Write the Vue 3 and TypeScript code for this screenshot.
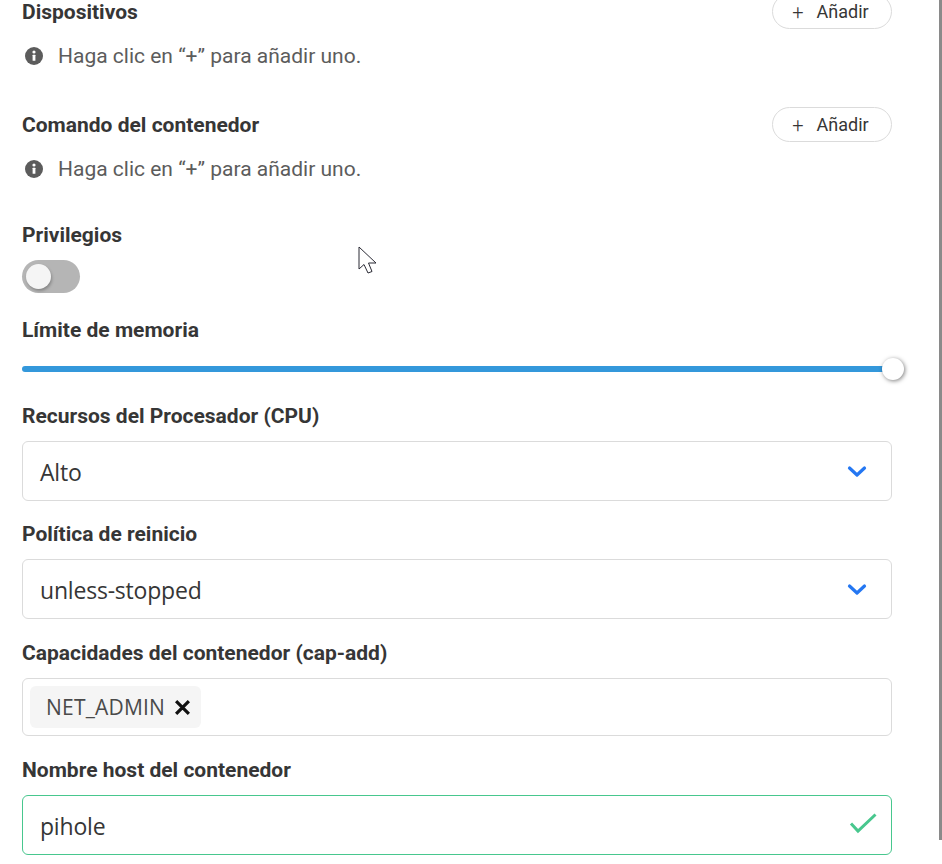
<script setup lang="ts">
const addSections = ['Dispositivos', 'Comando del contenedor']
const selects = [
  { label: 'Recursos del Procesador (CPU)', value: 'Alto' },
  { label: 'Política de reinicio', value: 'unless-stopped' },
]
</script>

<template>
  <div class="viewport">
    <form class="form" @submit.prevent>
      <section v-for="name in addSections" :key="name" class="add-section">
        <div class="add-head">
          <label class="label">{{ name }}</label>
          <button type="button" class="add-btn"><span class="plus">+</span>Añadir</button>
        </div>
        <div class="hint">
          <svg class="hint-icon" viewBox="0 0 18 18" width="18" height="18">
            <circle cx="9" cy="9" r="9" fill="#5c5c5c" />
            <circle cx="9" cy="5" r="1.6" fill="#fff" />
            <rect x="7.6" y="7.8" width="2.8" height="6" rx=".4" fill="#fff" />
          </svg>
          <span>Haga clic en “+” para añadir uno.</span>
        </div>
      </section>

      <div class="field privileged">
        <label class="label">Privilegios</label>
        <div class="switch"><span class="knob"></span></div>
      </div>

      <div class="field memory">
        <label class="label">Límite de memoria</label>
        <div class="slider">
          <div class="track"></div>
          <span class="thumb"></span>
        </div>
      </div>

      <div v-for="s in selects" :key="s.label" class="field select-field">
        <label class="label">{{ s.label }}</label>
        <div class="control">
          <span>{{ s.value }}</span>
          <svg class="chevron" viewBox="0 0 20 14" width="20" height="14">
            <path d="M2.5 3 L10 10 L17.5 3" fill="none" stroke="#2477f2" stroke-width="3.2" stroke-linecap="round" stroke-linejoin="round" />
          </svg>
        </div>
      </div>

      <div class="field caps">
        <label class="label">Capacidades del contenedor (cap-add)</label>
        <div class="tags">
          <span class="tag"><span class="tag-text">NET_ADMIN</span>
            <svg viewBox="0 0 16 16" width="17" height="17">
              <path d="M2 2 L14 14 M14 2 L2 14" stroke="#111" stroke-width="3" fill="none" />
            </svg>
          </span>
        </div>
      </div>

      <div class="field hostname">
        <label class="label">Nombre host del contenedor</label>
        <div class="control valid">
          <span>pihole</span>
          <svg class="check" viewBox="0 0 28 22" width="28" height="22">
            <path d="M2 9.5 L9 17 L26.5 0.5" fill="none" stroke="#48c78e" stroke-width="3" />
          </svg>
        </div>
      </div>
    </form>

    <!-- mouse pointer caught in the screenshot -->
    <svg class="pointer" viewBox="0 0 20 30" width="20" height="30">
      <path d="M1 1 V23 L6 18.5 L10 27 L14 25.5 L10.5 17 H18 Z" fill="#fff" stroke="#2b2b35" stroke-width="1" />
    </svg>
    <div class="scrollbar"></div>
  </div>
</template>

<style scoped>
.viewport {
  position: relative;
  height: 864px;
  overflow: hidden;
  background: #fff;
  font-family: Roboto, "Liberation Sans", sans-serif;
  color: #363636;
}
.form {
  width: 870px;
  margin: -6px 0 0 22px;
}
.label {
  display: block;
  font-size: 21px;
  font-weight: 700;
  line-height: 24px;
  color: #363636;
}
.add-section {
  height: 113px;
}
.add-head {
  display: flex;
  align-items: center;
  justify-content: space-between;
  height: 35px;
}
.add-btn {
  display: flex;
  align-items: center;
  justify-content: center;
  width: 120px;
  height: 35px;
  padding: 0 3px 0 0;
  background: #fff;
  border: 1px solid #dbdbdb;
  border-radius: 18px;
  font-family: inherit;
  font-size: 18px;
  color: #363636;
}
.plus {
  margin-right: 13px;
  font-size: 20px;
  font-weight: 300;
}
.hint {
  display: flex;
  align-items: center;
  margin-top: 15px;
  padding-left: 3px;
  font-size: 21px;
  line-height: 24px;
  color: #5c5c5c;
}
.hint-icon {
  margin-right: 15px;
}
.field {
  display: flex;
  flex-direction: column;
}
.privileged {
  margin-top: 3px;
}
.switch {
  position: relative;
  width: 58px;
  height: 33px;
  margin-top: 13px;
  background: #b5b5b5;
  border-radius: 17px;
}
.knob {
  position: absolute;
  left: 4px;
  top: 4px;
  width: 25px;
  height: 25px;
  border-radius: 50%;
  background: #f5f5f5;
  box-shadow: 1px 2px 3px rgba(0, 0, 0, 0.25);
}
.memory {
  margin-top: 25px;
}
.slider {
  position: relative;
  height: 22px;
  margin-top: 16px;
  display: flex;
  align-items: center;
}
.track {
  width: 100%;
  height: 6px;
  background: #3498db;
  border-radius: 3px 0 0 3px;
}
.thumb {
  position: absolute;
  right: -12px;
  top: 0;
  width: 22px;
  height: 22px;
  border-radius: 50%;
  background: #fff;
  box-shadow: 1px 1px 4px rgba(0, 0, 0, 0.5);
}
.select-field {
  margin-top: 21px;
}
.memory + .select-field {
  margin-top: 24px;
}
.control {
  display: flex;
  align-items: center;
  justify-content: space-between;
  height: 60px;
  margin-top: 13px;
  padding: 0 14px 0 17px;
  box-sizing: border-box;
  border: 1px solid #dbdbdb;
  border-radius: 6px;
  font-family: "Open Sans", Roboto, sans-serif;
  font-size: 23px;
  letter-spacing: -0.2px;
  color: #363636;
}
.control > span {
  position: relative;
  top: 1px;
}
.chevron {
  position: relative;
  top: 1px;
}
.check {
  overflow: visible;
}
.select-field .control {
  padding-right: 24px;
}
.caps {
  margin-top: 22px;
}
.tags {
  display: flex;
  align-items: center;
  height: 58px;
  margin-top: 13px;
  padding: 0 7px;
  box-sizing: border-box;
  border: 1px solid #dbdbdb;
  border-radius: 6px;
}
.tag {
  display: flex;
  align-items: center;
  gap: 9px;
  height: 42px;
  padding: 0 10px 0 16px;
  background: #f5f5f5;
  border-radius: 6px;
  font-family: "Open Sans", Roboto, sans-serif;
  font-size: 21px;
  letter-spacing: 0.2px;
  color: #4a4a4a;
}
.hostname {
  margin-top: 22px;
}
.valid {
  border-color: #48c78e;
}
.pointer {
  position: absolute;
  left: 358px;
  top: 246px;
}
.scrollbar {
  position: absolute;
  right: 0;
  top: 0;
  width: 3px;
  height: 840px;
  background: #8a8a8a;
}
</style>

<style>
body {
  margin: 0;
  background: #fff;
}
</style>
